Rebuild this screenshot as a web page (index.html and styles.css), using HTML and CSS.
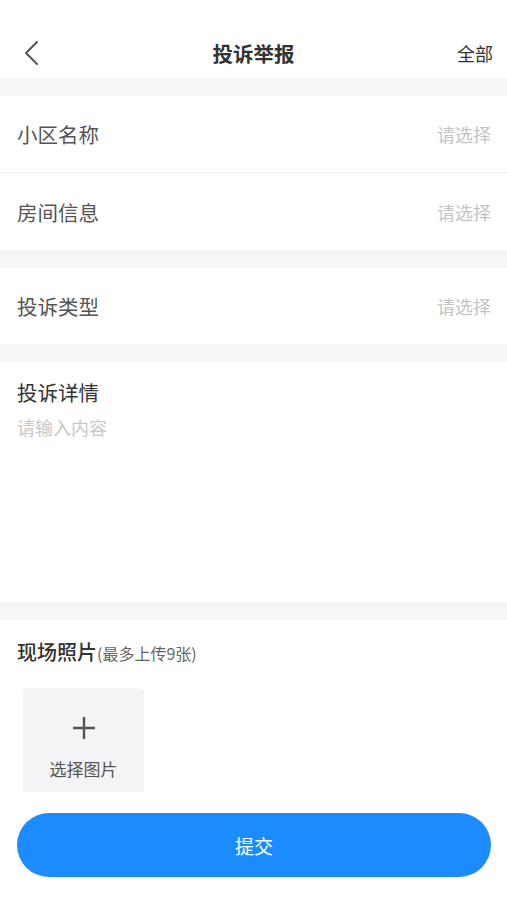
FILE: index.html
```html
<!DOCTYPE html>
<html lang="zh-CN">
<head>
  <meta charset="UTF-8">
  <title>投诉举报</title>
  <link rel="stylesheet" href="styles.css">
</head>
<body>
  <div class="page">
    <div class="nav-bar">
      <span class="nav-back">
        <svg width="16" height="26" viewBox="0 0 16 26">
          <path d="M13 2 L2 13 L13 24" fill="none" stroke="#555" stroke-width="2" stroke-linecap="round" stroke-linejoin="round"/>
        </svg>
      </span>
      <h1 class="nav-title">投诉举报</h1>
      <span class="nav-right">全部</span>
    </div>

    <div class="gap"></div>
    <div class="cell-group">
      <div class="cell cell-border">
        <span class="cell-label">小区名称</span>
        <span class="cell-value">请选择</span>
      </div>
      <div class="cell">
        <span class="cell-label">房间信息</span>
        <span class="cell-value">请选择</span>
      </div>
    </div>

    <div class="gap"></div>
    <div class="cell-group">
      <div class="cell cell-short">
        <span class="cell-label">投诉类型</span>
        <span class="cell-value">请选择</span>
      </div>
    </div>

    <div class="gap"></div>
    <div class="detail">
      <div class="section-title">投诉详情</div>
      <textarea class="detail-input" placeholder="请输入内容"></textarea>
    </div>

    <div class="gap"></div>
    <div class="photos">
      <div class="photos-title">现场照片<span class="photos-tip">(最多上传9张)</span></div>
      <div class="upload">
        <svg width="24" height="24" viewBox="0 0 24 24">
          <path d="M12 1 V23 M1 12 H23" stroke="#555" stroke-width="2.4"/>
        </svg>
        <span class="upload-text">选择图片</span>
      </div>
    </div>
  </div>

  <div class="footer">
    <button class="submit">提交</button>
  </div>
</body>
</html>
```

FILE: styles.css
```css
body {
  margin: 0;
  padding: 0;
  background: #fff;
  font-family: "Noto Sans CJK SC", "Noto Sans", sans-serif;
  color: #333;
}
.page {
  display: flex;
  flex-direction: column;
  min-height: 100vh;
}
.nav-bar {
  display: flex;
  align-items: center;
  justify-content: space-between;
  height: 50px;
  margin-top: 28px;
  padding: 0 14px 0 24px;
}
.nav-back {
  display: flex;
  width: 60px;
}
.nav-title {
  margin: 0;
  font-size: 20.5px;
  font-weight: 700;
  color: #333;
}
.nav-right {
  width: 70px;
  text-align: right;
  font-size: 18px;
  color: #333;
}
.gap {
  height: 18px;
  background: #f6f6f6;
}
.cell {
  display: flex;
  align-items: center;
  justify-content: space-between;
  height: 77px;
  padding: 0 16px 0 17px;
  box-sizing: border-box;
}
.cell-border {
  border-bottom: 1px solid #f1f1f1;
}
.cell-short {
  height: 76px;
}
.cell-label {
  font-size: 20.5px;
  color: #555;
}
.cell-value {
  font-size: 18px;
  color: #c4c4c4;
}
.detail {
  height: 240px;
  padding: 16px 17px 0;
  box-sizing: border-box;
}
.section-title {
  font-size: 20.5px;
  line-height: 28px;
  color: #333;
}
.detail-input {
  display: block;
  width: 100%;
  height: 150px;
  margin-top: 9px;
  padding: 0;
  border: none;
  outline: none;
  resize: none;
  font-family: inherit;
  font-size: 18px;
  line-height: 24px;
  color: #333;
}
.detail-input::placeholder {
  color: #c8c8c8;
}
.photos {
  padding: 20px 17px 0;
}
.photos-title {
  font-size: 20px;
  line-height: 24px;
  font-weight: 500;
  color: #333;
}
.photos-tip {
  font-size: 16px;
  font-weight: 400;
  color: #666;
}
.upload {
  display: flex;
  flex-direction: column;
  align-items: center;
  width: 121px;
  height: 121px;
  margin: 23px 0 0 6px;
  padding-top: 28px;
  box-sizing: border-box;
  background: #f3f4f6;
  border-radius: 4px;
}
.upload-text {
  margin-top: 18px;
  font-size: 17px;
  line-height: 22px;
  color: #555;
}
.footer {
  position: fixed;
  left: 0;
  right: 0;
  bottom: 0;
  height: 108px;
  padding: 21px 16px 0 17px;
  box-sizing: border-box;
  background: #fff;
}
.submit {
  display: block;
  width: 100%;
  height: 64px;
  border: none;
  border-radius: 32px;
  background: #1a8cff;
  color: #fff;
  font-family: inherit;
  font-size: 19px;
}
```
